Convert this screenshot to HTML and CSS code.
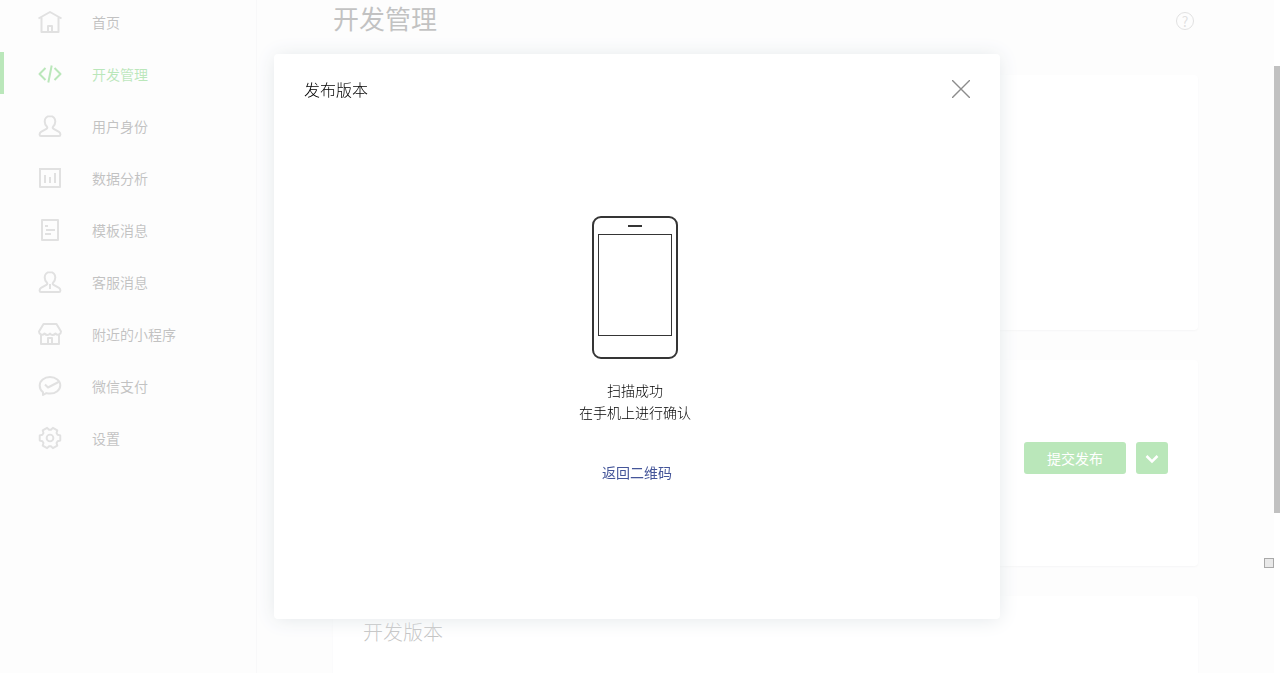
FILE: index.html
```html
<!DOCTYPE html>
<html lang="zh-CN">
<head>
    <meta charset="UTF-8">
    <meta name="viewport" content="width=device-width, initial-scale=1.0">
    <title>开发管理</title>
    <link rel="stylesheet" href="styles.css">
</head>
<body>
    <div class="page">
        <nav class="sidebar">
            <a class="menu-item" href="#">
                <svg class="icon" viewBox="0 0 24 24"><path d="M.5 8.500 12 2l11.500 6.500M3.500 7.500V22h17V7.500M10 22v-6h4v6"/></svg>
                <span>首页</span>
            </a>
            <a class="menu-item active" href="#">
                <svg class="icon" viewBox="0 0 24 24"><path d="M7.500 6 1.500 12l6 6M16.500 6l6 6-6 6M13.700 3.500l-3.400 17"/></svg>
                <span>开发管理</span>
            </a>
            <a class="menu-item" href="#">
                <svg class="icon" viewBox="0 0 24 24"><path d="M12 2C8.700 2 6.700 4.400 6.700 7.500c0 2.300 1 4 2.300 5.300.6.800.3 1.500-.6 2L3 17.800c-1 .6-1.400 1.500-1.400 2.700 0 .9.500 1.500 1.400 1.500h18c.9 0 1.400-.6 1.400-1.500 0-1.200-.4-2.100-1.400-2.700l-5.400-3c-.9-.5-1.200-1.200-.6-2 1.300-1.300 2.300-3 2.300-5.300C17.300 4.400 15.300 2 12 2z"/></svg>
                <span>用户身份</span>
            </a>
            <a class="menu-item" href="#">
                <svg class="icon" viewBox="0 0 24 24"><path d="M1 3h22M2 3v18h20V3M7 9v8M12 11v6M17 7v10"/></svg>
                <span>数据分析</span>
            </a>
            <a class="menu-item" href="#">
                <svg class="icon" viewBox="0 0 24 24"><path d="M4 2h16v20H4zM7 8h3M8 12h9M7 16h6"/></svg>
                <span>模板消息</span>
            </a>
            <a class="menu-item" href="#">
                <svg class="icon" viewBox="0 0 24 24"><path d="M12 2C8.700 2 6.700 4.400 6.700 7.500c0 2.300 1 4 2.300 5.300.6.800.3 1.500-.6 2L3 17.800c-1 .6-1.400 1.500-1.400 2.700 0 .9.500 1.500 1.400 1.500h18c.9 0 1.400-.6 1.400-1.500 0-1.200-.4-2.100-1.400-2.700l-5.400-3c-.9-.5-1.200-1.200-.6-2 1.300-1.300 2.300-3 2.300-5.300C17.300 4.400 15.300 2 12 2zM12 14v5"/></svg>
                <span>客服消息</span>
            </a>
            <a class="menu-item" href="#">
                <svg class="icon" viewBox="0 0 24 24"><path d="M5.500 2h13L23 9.500c0 3-3.500 4.300-5.500 2-1.700 2-4.300 2-5.500 0-1.200 2-3.800 2-5.500 0-2 2.300-5.500 1-5.500-2zM3 13v9h18v-9M10 22v-6h4v6"/></svg>
                <span>附近的小程序</span>
            </a>
            <a class="menu-item" href="#">
                <svg class="icon" viewBox="0 0 24 24"><path d="M5 18.300C2.800 16.500 1.700 14 1.700 11.500 1.700 6.700 6.300 3 12 3s10.300 3.700 10.300 8.300S17.700 19.600 12 19.600c-1.300 0-2.500-.2-3.700-.5L5 21z"/><path d="m7 10.500 3 3 11.500-6"/></svg>
                <span>微信支付</span>
            </a>
            <a class="menu-item" href="#">
                <svg class="icon" viewBox="-.5 -.5 25 25"><path d="M22.700 9.300v5.400l-2.800.7-1.100 1.800.8 2.700-4.600 2.700-2-2h-2l-2 2-4.600-2.700.8-2.700-1.100-1.800-2.800-.7V9.300l2.800-.7 1.100-1.800-.8-2.700L9 1.400l2 2h2l2-2 4.600 2.700-.8 2.700 1.100 1.800z"/><circle cx="12" cy="12" r="3.500"/></svg>
                <span>设置</span>
            </a>
        </nav>
        <main class="main">
            <div class="page-header">
                <h1>开发管理</h1>
                <a class="help" href="#" aria-label="帮助">?</a>
            </div>
            <section class="card card-large"></section>
            <section class="card card-release">
                <button type="button" class="btn">提交发布</button>
                <button type="button" class="btn btn-more" aria-label="更多">
                    <svg viewBox="0 0 14 12"><path d="M1.500 4 7 9.500 12.500 4"/></svg>
                </button>
            </section>
            <section class="card card-large">
                <h2>开发版本</h2>
            </section>
        </main>
    </div>

    <div class="overlay">
        <div class="dialog" role="dialog" aria-labelledby="dialogTitle">
            <div class="dialog-header">
                <h3 id="dialogTitle">发布版本</h3>
                <button type="button" class="close" aria-label="关闭">
                    <svg viewBox="0 0 18 18"><path d="M0 0l18 18M18 0 0 18"/></svg>
                </button>
            </div>
            <div class="dialog-body">
                <div class="status">
                    <svg class="phone" viewBox="0 0 86 143">
                        <rect x="1" y="1" width="84" height="141" rx="8" stroke-width="2"/>
                        <rect x="6.500" y="18.500" width="73" height="101"/>
                        <path d="M36 10h14" stroke-width="2"/>
                    </svg>
                    <p>扫描成功<br>在手机上进行确认</p>
                </div>
                <a class="back" href="#">返回二维码</a>
            </div>
        </div>
    </div>

    <div class="scrollbar"><div class="thumb"></div></div>
    <div class="handle"></div>
</body>
</html>
```

FILE: styles.css
```css
* {
    box-sizing: border-box;
}
body {
    margin: 0;
    font-family: "Noto Sans CJK SC", sans-serif;
    font-size: 14px;
    line-height: 22px;
    color: #353535;
    background-color: #f8f8f9;
    overflow: hidden;
}
h1, h2, h3, p {
    margin: 0;
    font-weight: 300;
}
a {
    text-decoration: none;
}
svg {
    display: block;
    fill: none;
    stroke: currentColor;
}
.page {
    display: flex;
    height: 100vh;
    padding-right: 6px;
    overflow: hidden;
}
.sidebar {
    display: flex;
    flex-direction: column;
    gap: 10px;
    width: 257px;
    flex-shrink: 0;
    border-right: 1px solid #e7e7eb;
}
.menu-item {
    display: flex;
    align-items: center;
    gap: 30px;
    height: 42px;
    padding: 2px 0 0 34px;
    border-left: 4px solid transparent;
    color: #353535;
}
.icon {
    width: 24px;
    height: 24px;
    color: #9a9a9a;
    stroke-width: 2;
    stroke-linejoin: round;
}
.menu-item.active {
    border-left-color: #1aad19;
    color: #1aad19;
}
.active .icon {
    color: #1aad19;
}
.main {
    display: flex;
    flex-direction: column;
    gap: 30px;
    flex: 1;
    padding: 0 76px;
}
.page-header {
    display: flex;
    align-items: flex-start;
    justify-content: space-between;
    height: 45px;
    flex-shrink: 0;
    padding-right: 4px;
}
h1 {
    font-size: 26px;
    font-weight: 400;
    line-height: 36px;
}
.help {
    width: 18px;
    height: 18px;
    margin-top: 12px;
    border: 1px solid #9a9a9a;
    border-radius: 50%;
    color: #9a9a9a;
    line-height: 16px;
    text-align: center;
}
.card {
    flex-shrink: 0;
    padding: 20px 30px;
    background-color: #fff;
    border-radius: 4px;
    box-shadow: 0 1px 2px rgba(0, 0, 0, 0.1);
}
.card-large {
    min-height: 255px;
}
.card-release {
    display: flex;
    align-items: center;
    justify-content: flex-end;
    gap: 10px;
    min-height: 206px;
    padding-top: 10px;
}
h2 {
    font-size: 20px;
    line-height: 32px;
}
.btn {
    display: flex;
    align-items: center;
    justify-content: center;
    width: 102px;
    height: 32px;
    padding: 0;
    border: none;
    border-radius: 3px;
    background-color: #1aad19;
    color: #fff;
    font: inherit;
    cursor: pointer;
}
.btn-more {
    width: 32px;
}
.btn-more svg {
    width: 14px;
    height: 12px;
    stroke-width: 2.5;
}
.overlay {
    position: fixed;
    inset: 0;
    display: flex;
    align-items: center;
    justify-content: center;
    padding-right: 6px;
    background-color: rgba(255, 255, 255, 0.7);
}
.dialog {
    width: 726px;
    max-width: 90%;
    padding: 22px 30px 136px;
    background-color: #fff;
    border-radius: 4px;
    box-shadow: 0 1px 20px #e4e8eb;
}
.dialog-header {
    display: flex;
    align-items: center;
    justify-content: space-between;
}
h3 {
    font-size: 16px;
    line-height: 26px;
    color: #000;
}
.close {
    padding: 0;
    border: none;
    background: none;
    color: #8c8c8c;
    cursor: pointer;
}
.close svg {
    width: 18px;
    height: 18px;
    stroke-width: 1.4;
}
.dialog-body {
    display: flex;
    flex-direction: column;
    align-items: center;
    gap: 38px;
    padding-top: 114px;
}
.status {
    display: flex;
    flex-direction: column;
    align-items: center;
    gap: 20px;
    padding-right: 4px;
    text-align: center;
}
.phone {
    width: 86px;
    height: 143px;
}
.status p {
    color: #000;
}
.back {
    color: #459;
}
.scrollbar {
    position: fixed;
    top: 0;
    right: 0;
    bottom: 0;
    width: 6px;
    padding-top: 66px;
    background-color: #fff;
}
.thumb {
    height: 447px;
    background-color: #c1c1c1;
}
.handle {
    position: fixed;
    right: 6px;
    bottom: 105px;
    width: 10px;
    height: 10px;
    border: 1px solid #a9a9a9;
    background-color: #e9e9e9;
}
```
